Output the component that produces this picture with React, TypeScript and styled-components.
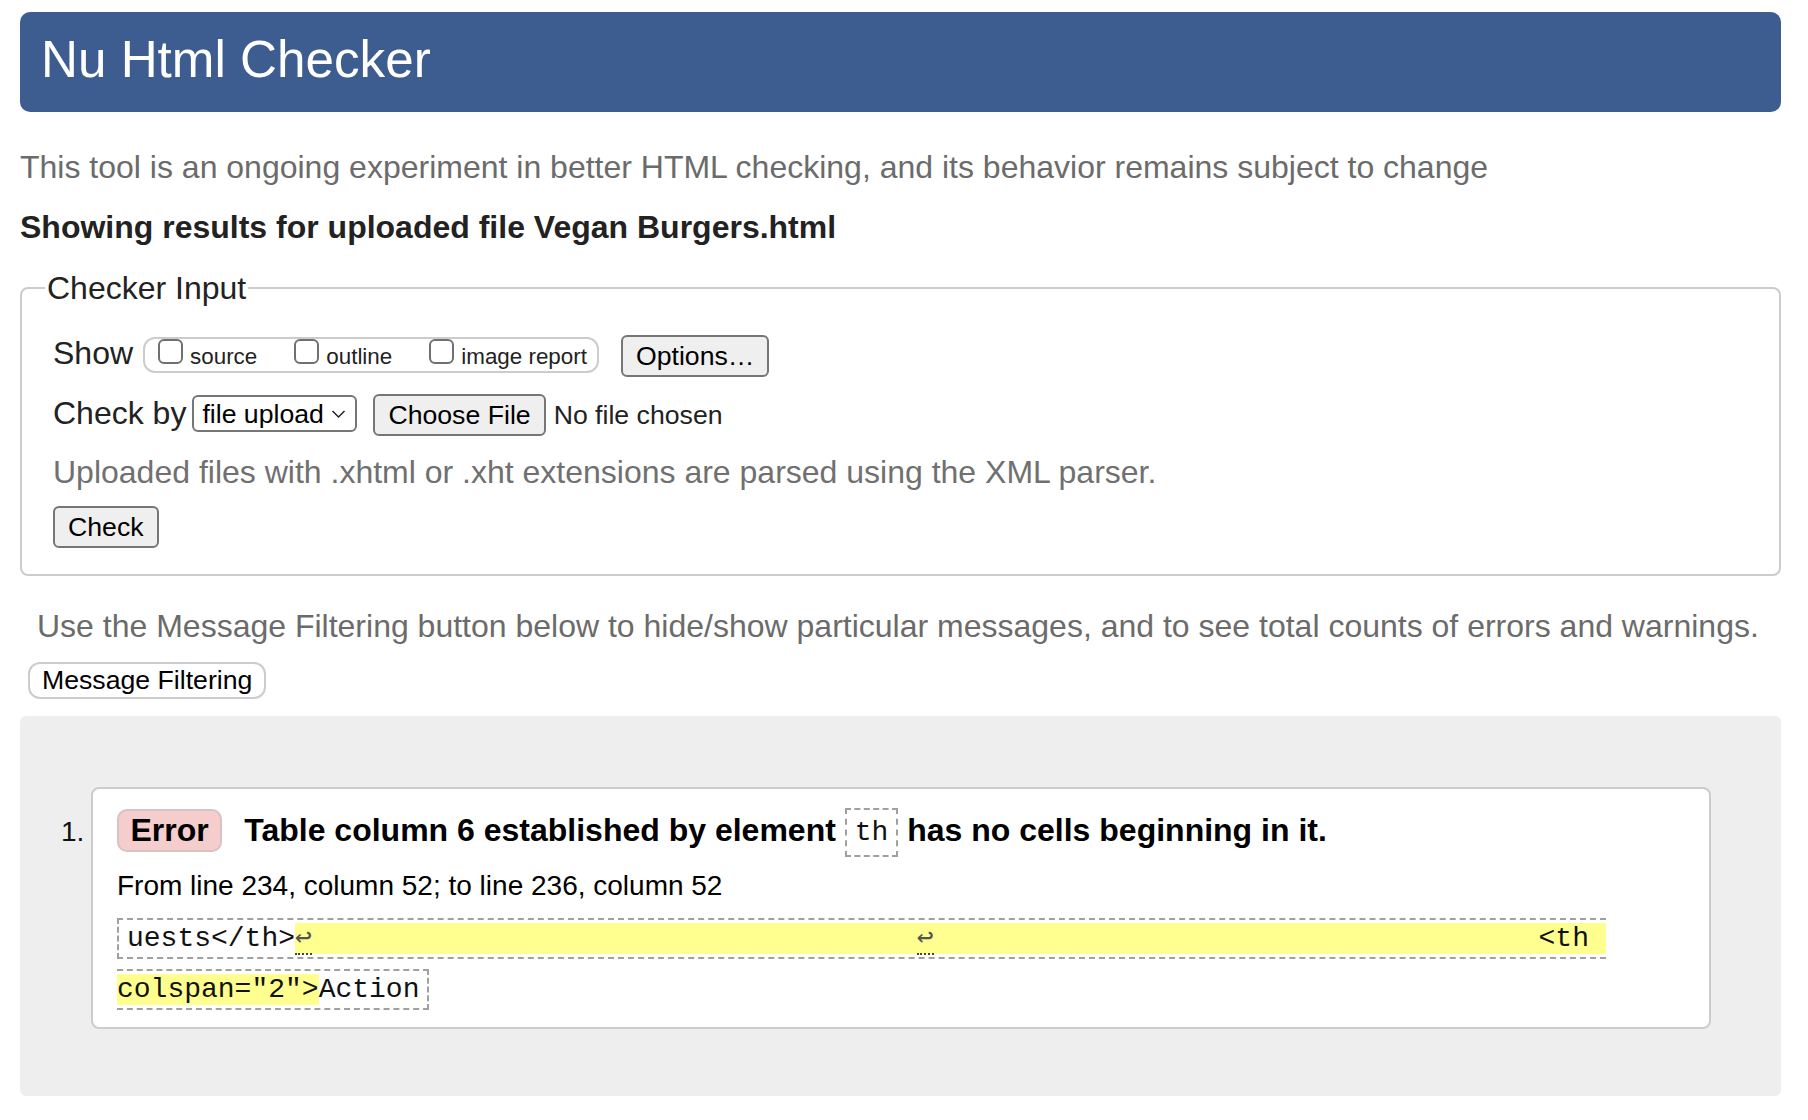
import React from 'react';
import styled, { createGlobalStyle } from 'styled-components';

const GlobalStyle = createGlobalStyle`
  html, body { margin: 0; padding: 0; background: #fff; }
  body {
    font-family: "Liberation Sans", Arial, Helvetica, sans-serif;
    color: #222;
  }
`;

const Page = styled.div`
  padding: 12px 27px 26px 20px;
`;

const Header = styled.header`
  height: 100px;
  box-sizing: border-box;
  background: #3d5c90;
  border-radius: 10px;
  padding: 19px 0 0 21px;
`;

const Title = styled.h1`
  margin: 0;
  font-size: 51.2px;
  line-height: 58.8px;
  font-weight: normal;
  color: #fff;
`;

const Intro = styled.p`
  margin: 36.5px 0 0;
  font-size: 32px;
  line-height: 36.8px;
  color: #6b6b6b;
`;

const ResultsFor = styled.h2`
  margin: 24px 0 0;
  font-size: 32px;
  line-height: 36.8px;
  font-weight: bold;
  color: #222;
`;

const Fieldset = styled.fieldset`
  margin: 23.5px 0 0;
  min-width: 0;
  border: 2px solid #cccccc;
  border-radius: 8px;
  padding: 0 31px 26px;
`;

const Legend = styled.legend`
  font-size: 32px;
  line-height: 36.8px;
  padding: 0 2px;
  margin-left: -8px;
  color: #222;
`;

const FormRow = styled.div<{ $mt: number }>`
  display: flex;
  align-items: center;
  height: 44px;
  margin-top: ${(p) => p.$mt}px;
`;

const RowLabel = styled.span`
  font-size: 32px;
  line-height: 36.8px;
  color: #222;
`;

const ShowGroup = styled.div`
  display: flex;
  align-items: flex-start;
  gap: 37px;
  height: 36px;
  box-sizing: border-box;
  border: 2px solid #cccccc;
  border-radius: 12px;
  padding: 0 10px 0 13px;
  margin: 4px 0 0 10px;
`;

const ShowOption = styled.label`
  display: flex;
  align-items: flex-start;
  font-size: 22.4px;
  line-height: 25.8px;
  color: #222;
`;

const Checkbox = styled.input.attrs({ type: 'checkbox' })`
  appearance: none;
  -webkit-appearance: none;
  flex: none;
  width: 25px;
  height: 25px;
  margin: 0 7px 0 0;
  box-sizing: border-box;
  border: 2px solid #707070;
  border-radius: 6px;
  background: #fff;
`;

const OptionText = styled.span`
  margin-top: 4.7px;
`;

const Button = styled.button<{ $ml?: number; $mt?: number }>`
  height: 42px;
  box-sizing: border-box;
  padding: 0 13px;
  margin: ${(p) => p.$mt ?? 0}px 0 0 ${(p) => p.$ml ?? 0}px;
  font-family: "Liberation Sans", Arial, Helvetica, sans-serif;
  font-size: 26.67px;
  line-height: 30.6px;
  color: #000;
  background: #efefef;
  border: 2px solid #767676;
  border-radius: 6px;
  white-space: nowrap;
`;

const SelectBox = styled.div`
  display: flex;
  align-items: center;
  justify-content: space-between;
  width: 165px;
  height: 37px;
  box-sizing: border-box;
  margin: 2px 0 0 6px;
  padding: 0 9px 0 8px;
  border: 2px solid #767676;
  border-radius: 6px;
  background: #fff;
  font-size: 26.67px;
  line-height: 30.6px;
  color: #000;
`;

const FileStatus = styled.span`
  margin: 4px 0 0 8px;
  font-size: 26.67px;
  line-height: 30.6px;
  color: #222;
`;

const Hint = styled.p`
  margin: 19.5px 0 0;
  font-size: 32px;
  line-height: 36.8px;
  color: #707070;
`;

const ButtonRow = styled.div`
  display: flex;
  margin-top: 14.7px;
`;

const FilterNote = styled.p`
  margin: 32.3px 0 0;
  padding-left: 17px;
  font-size: 32px;
  line-height: 36.8px;
  color: #6b6b6b;
  white-space: nowrap;
`;

const FilterButton = styled.button`
  display: block;
  height: 37px;
  box-sizing: border-box;
  margin: 16.7px 0 0 8px;
  padding: 0 12px;
  font-family: "Liberation Sans", Arial, Helvetica, sans-serif;
  font-size: 26.67px;
  line-height: 30.6px;
  color: #000;
  background: #fff;
  border: 2px solid #cccccc;
  border-radius: 12px;
`;

const Results = styled.div`
  margin-top: 17px;
  background: #eeeeee;
  border-radius: 6px;
  padding: 71px 70px 67px 41px;
`;

const MessageList = styled.ol`
  list-style: none;
  margin: 0;
  padding: 0;
`;

const MessageItem = styled.li`
  display: flex;
  align-items: flex-start;
`;

const ItemNumber = styled.span`
  flex: none;
  width: 30px;
  margin-top: 29.7px;
  font-size: 28px;
  line-height: 32.2px;
  color: #111;
`;

const Card = styled.div`
  flex: 1;
  min-width: 0;
  background: #fff;
  border: 2px solid #cccccc;
  border-radius: 8px;
  padding: 20px 24px 12px;
`;

const TitleRow = styled.div`
  display: flex;
  align-items: center;
  height: 43px;
`;

const Badge = styled.span`
  display: flex;
  align-items: center;
  height: 43px;
  box-sizing: border-box;
  padding: 0 11.5px;
  border: 2px solid #d8c3c3;
  border-radius: 10px;
  background: #f5cdcd;
  font-size: 32px;
  line-height: 36.8px;
  font-weight: bold;
  color: #000;
`;

const MessageText = styled.span`
  margin-left: 22px;
  font-size: 32px;
  line-height: 36.8px;
  font-weight: bold;
  color: #000;
`;

const ElementCode = styled.code`
  display: inline-block;
  font-family: "Liberation Mono", "Courier New", monospace;
  font-size: 28px;
  font-weight: normal;
  line-height: 31px;
  padding: 7px 8px;
  margin: -8px 0;
  border: 2px dashed #a0a0a0;
  vertical-align: 1px;
  color: #111;
`;

const Location = styled.p`
  margin: 18.7px 0 0;
  font-size: 28px;
  line-height: 32.2px;
  color: #000;
`;

const Extract = styled.p`
  margin: 8.45px 0 0;
  font-family: "Liberation Mono", "Courier New", monospace;
  font-size: 28px;
  line-height: 51px;
  white-space: pre-wrap;
  color: #111;
`;

const ExtractCode = styled.code`
  font-family: inherit;
  font-size: inherit;
  padding: 3px 8px;
  border: 2px dashed #a0a0a0;
`;

const Highlight = styled.mark`
  background: #ffff8f;
  color: inherit;
`;

const LineBreak = styled.span`
  font-family: "DejaVu Sans Mono", "Liberation Mono", monospace;
  color: #555;
  border-bottom: 2px dotted #444;
`;

const Chevron = () => (
  <svg width="15" height="10" viewBox="0 0 15 10" aria-hidden="true">
    <polyline points="1.5,2 7.5,8 13.5,2" fill="none" stroke="#222" strokeWidth="1.5" />
  </svg>
);

const SPACES = ' '.repeat(36);

export default function App() {
  return (
    <>
      <GlobalStyle />
      <Page>
        <Header>
          <Title>Nu Html Checker</Title>
        </Header>
        <Intro>
          This tool is an ongoing experiment in better HTML checking, and its behavior remains subject to change
        </Intro>
        <ResultsFor>Showing results for uploaded file Vegan Burgers.html</ResultsFor>

        <Fieldset>
          <Legend>Checker Input</Legend>
          <FormRow $mt={24.6}>
            <RowLabel>Show</RowLabel>
            <ShowGroup>
              <ShowOption>
                <Checkbox />
                <OptionText>source</OptionText>
              </ShowOption>
              <ShowOption>
                <Checkbox />
                <OptionText>outline</OptionText>
              </ShowOption>
              <ShowOption>
                <Checkbox />
                <OptionText>image report</OptionText>
              </ShowOption>
            </ShowGroup>
            <Button $ml={22} $mt={6}>Options…</Button>
          </FormRow>
          <FormRow $mt={16}>
            <RowLabel>Check by</RowLabel>
            <SelectBox>
              <span>file upload</span>
              <Chevron />
            </SelectBox>
            <Button $ml={16} $mt={4}>Choose File</Button>
            <FileStatus>No file chosen</FileStatus>
          </FormRow>
          <Hint>Uploaded files with .xhtml or .xht extensions are parsed using the XML parser.</Hint>
          <ButtonRow>
            <Button>Check</Button>
          </ButtonRow>
        </Fieldset>

        <FilterNote>
          Use the Message Filtering button below to hide/show particular messages, and to see total counts of errors and warnings.
        </FilterNote>
        <FilterButton>Message Filtering</FilterButton>

        <Results>
          <MessageList>
            <MessageItem>
              <ItemNumber>1.</ItemNumber>
              <Card>
                <TitleRow>
                  <Badge>Error</Badge>
                  <MessageText>
                    Table column 6 established by element <ElementCode>th</ElementCode> has no cells beginning in it.
                  </MessageText>
                </TitleRow>
                <Location>From line 234, column 52; to line 236, column 52</Location>
                <Extract>
                  <ExtractCode>
                    {'uests</th>'}
                    <Highlight>
                      <LineBreak>↩</LineBreak>
                      {SPACES}
                      <LineBreak>↩</LineBreak>
                      {SPACES + '<th colspan="2">'}
                    </Highlight>
                    {'Action'}
                  </ExtractCode>
                </Extract>
              </Card>
            </MessageItem>
          </MessageList>
        </Results>
      </Page>
    </>
  );
}
